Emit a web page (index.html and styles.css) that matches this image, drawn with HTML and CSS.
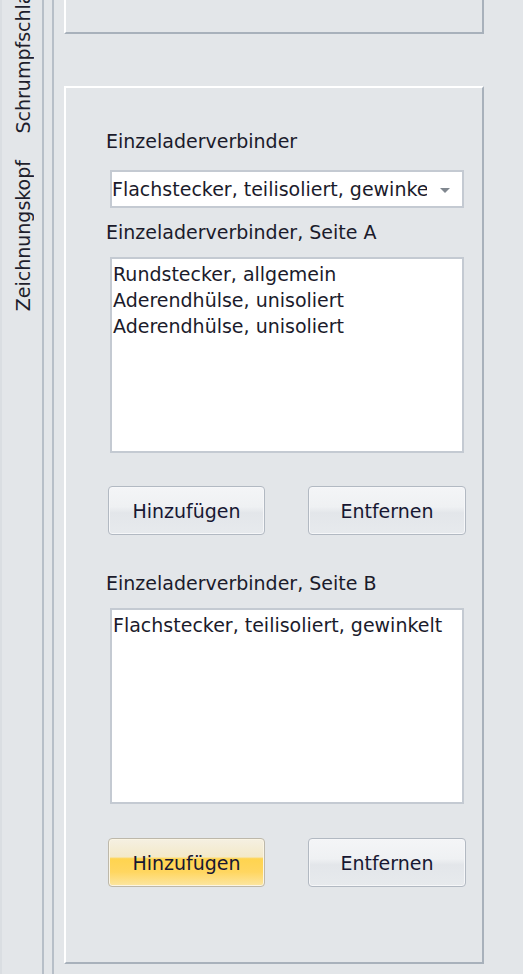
FILE: index.html
```html
<!DOCTYPE html>
<html lang="de">
<head>
<meta charset="UTF-8" />
<meta name="viewport" content="width=device-width, initial-scale=1" />
<title>Einzeladerverbinder</title>
<link rel="stylesheet" href="styles.css">
</head>
<body>

<div class="window">
  <div class="side">
    <div class="tabs">
      <div class="tab">Schrumpfschlauch</div>
      <div class="tab">Zeichnungskopf</div>
    </div>
  </div>
  <div class="gutter"></div>

  <div class="main">
    <div class="panel panel-cut"></div>

    <div class="panel panel-connectors">
      <div class="label label-first">Einzeladerverbinder</div>
      <div class="combo">
        <span class="combo-text">Flachstecker, teilisoliert, gewinkelt</span>
        <span class="combo-arrow"></span>
      </div>

      <div class="label label-near">Einzeladerverbinder, Seite A</div>
      <div class="listbox">
        <div class="item">Rundstecker, allgemein</div>
        <div class="item">Aderendhülse, unisoliert</div>
        <div class="item">Aderendhülse, unisoliert</div>
      </div>
      <div class="buttons">
        <button class="btn">Hinzufügen</button>
        <button class="btn">Entfernen</button>
      </div>

      <div class="label label-far">Einzeladerverbinder, Seite B</div>
      <div class="listbox">
        <div class="item">Flachstecker, teilisoliert, gewinkelt</div>
      </div>
      <div class="buttons buttons-last">
        <button class="btn btn-hover">Hinzufügen</button>
        <button class="btn">Entfernen</button>
      </div>
    </div>
  </div>
</div>

</body>
</html>
```

FILE: styles.css
```css
body {
  margin: 0;
  padding: 0;
  background: #e3e6e9;
  color: #1b1b2b;
  font-family: "DejaVu Sans", Tahoma, sans-serif;
  font-size: 19px;
  line-height: 22px;
  overflow: hidden;
}
.window {
  display: flex;
  height: 974px;
}

/* vertikale Reiter links */
.side {
  width: 40px;
  border-left: 2px solid #dadee2;
  border-right: 2px solid #b7bfc8;
  flex-shrink: 0;
}
.tabs {
  height: 324px;
  display: flex;
  flex-direction: column;
  justify-content: flex-end;
  align-items: flex-start;
  padding-left: 10px;
}
.tab {
  writing-mode: vertical-rl;
  transform: rotate(180deg);
  white-space: nowrap;
  padding: 13px 0;
  color: #1e1e2c;
}
.gutter {
  width: 8px;
  border-right: 2px solid #b7bfc8;
  flex-shrink: 0;
}

.main {
  padding-left: 10px;
}
.panel {
  box-sizing: border-box;
  width: 420px;
  border-left: 2px solid #ffffff;
  border-top: 2px solid #ffffff;
  border-right: 2px solid #a8b1bb;
  border-bottom: 2px solid #a8b1bb;
}
.panel-cut {
  height: 34px;
  border-top: none;
}
.panel-connectors {
  margin-top: 52px;
  height: 878px;
  padding-left: 40px;
}

.label {
  white-space: nowrap;
}
.label-first { margin-top: 42px; }
.label-near { margin-top: 13px; }
.label-far { margin-top: 37px; }

.combo {
  box-sizing: border-box;
  display: flex;
  align-items: center;
  width: 354px;
  height: 38px;
  margin: 18px 0 0 4px;
  background: #ffffff;
  border: 2px solid #c4cad2;
}
.combo-text {
  flex: 1;
  overflow: hidden;
  white-space: nowrap;
}
.combo-arrow {
  width: 0;
  height: 0;
  margin: 2px 12px 0 13px;
  border-left: 5px solid transparent;
  border-right: 5px solid transparent;
  border-top: 5px solid #80878f;
}

.listbox {
  box-sizing: border-box;
  width: 354px;
  height: 196px;
  margin: 14px 0 0 4px;
  padding: 2px 1px;
  background: #ffffff;
  border: 2px solid #c4cad2;
  line-height: 26px;
}
.item {
  white-space: nowrap;
}

.buttons {
  display: flex;
  gap: 43px;
  margin: 33px 0 0 2px;
}
.buttons-last {
  margin-top: 34px;
}
.btn {
  box-sizing: border-box;
  width: 157px;
  height: 49px;
  font-family: inherit;
  font-size: 19px;
  color: #171732;
  border: 1px solid #b2b9c2;
  border-radius: 4px;
  box-shadow: inset 0 0 0 1px #f6f7f9;
  background: linear-gradient(#f4f5f7 0%, #eff1f3 42%, #e3e6ea 55%, #e7eaed 100%);
  padding: 0;
}
.btn + .btn {
  width: 158px;
}
.btn-hover {
  border-color: #bdb8aa;
  box-shadow: inset 0 0 0 1px #fbf5e4;
  background: linear-gradient(#f5f0e2 0%, #f3e9c9 38%, #ffd44f 42%, #ffd660 70%, #fce6a2 100%);
}
```
